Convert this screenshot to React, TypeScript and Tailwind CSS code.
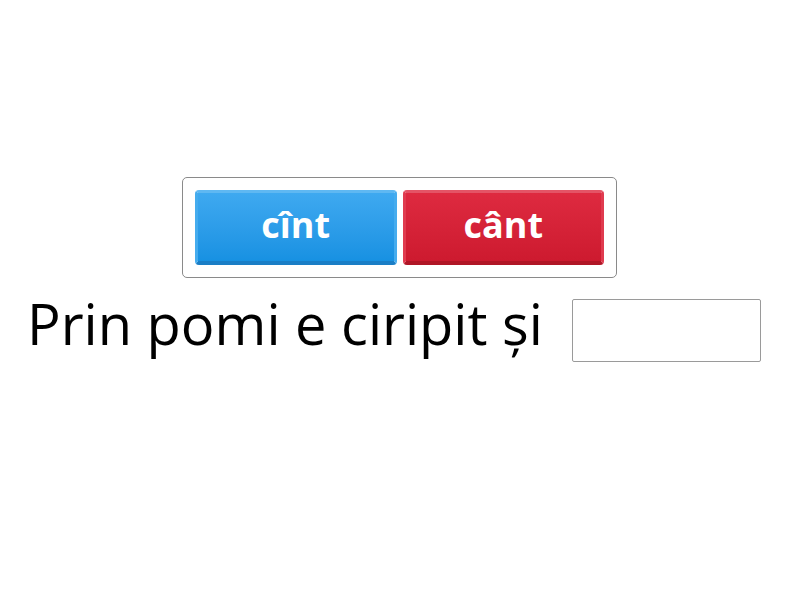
export default function App() {
  return (
    <div className="w-[800px] h-[600px] bg-white flex flex-col items-center" style={{ fontFamily: '"Open Sans", sans-serif' }}>
      <div className="mt-[177px] ml-[-1px] w-[435px] h-[101px] border border-[#8a8a8a] rounded-[5px] flex gap-[6px] p-[12px]">
        <button className="flex-1 rounded-[4px] bg-gradient-to-b from-[#3ea9f0] to-[#1791e2] border-t-[3px] border-l-[3px] border-r-[3px] border-b-[4px] border-t-[#5fb8f2] border-l-[#45acee] border-r-[#45acee] border-b-[#1a7ec6] text-white text-[36px] font-bold leading-none flex items-center justify-center pb-[4px]">
          cînt
        </button>
        <button className="flex-1 rounded-[4px] bg-gradient-to-b from-[#de2a40] to-[#cd1a2f] border-t-[3px] border-l-[3px] border-r-[3px] border-b-[4px] border-t-[#e45466] border-l-[#e03b4f] border-r-[#e03b4f] border-b-[#b01626] text-white text-[36px] font-bold leading-none flex items-center justify-center pb-[4px]">
          cânt
        </button>
      </div>
      <div className="mt-[17px] w-full flex items-center pl-[27px]">
        <span className="text-black text-[56px] leading-none mb-[15px]">Prin pomi e ciripit și</span>
        <div className="ml-auto mr-[39px] w-[189px] h-[63px] border border-[#9a9a9a] rounded-[2px]" />
      </div>
    </div>
  );
}
